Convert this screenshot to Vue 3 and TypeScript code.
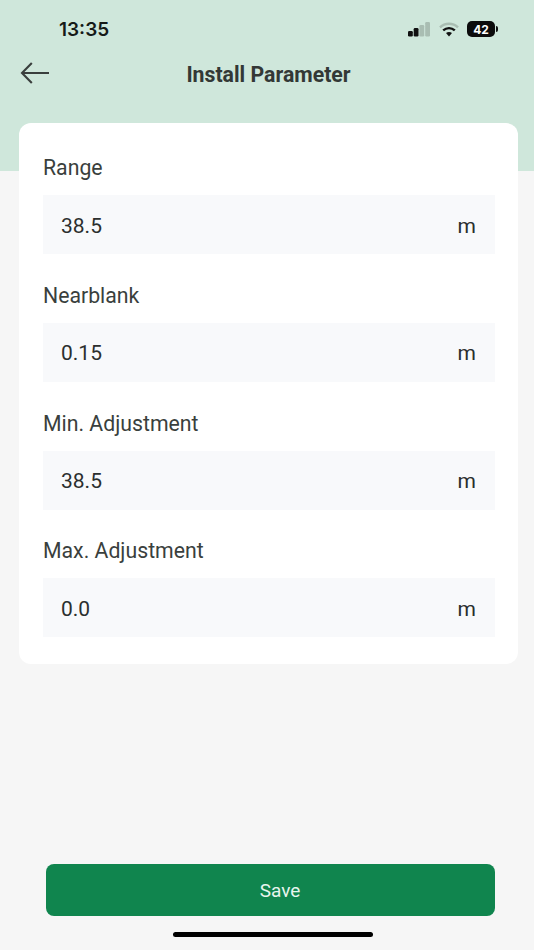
<script setup lang="ts">
const fields = [
  { label: 'Range', value: '38.5', unit: 'm' },
  { label: 'Nearblank', value: '0.15', unit: 'm' },
  { label: 'Min. Adjustment', value: '38.5', unit: 'm' },
  { label: 'Max. Adjustment', value: '0.0', unit: 'm' },
]
</script>

<template>
  <div class="page">
    <header class="hero">
      <div class="status">
        <span class="time">13:35</span>
        <div class="indicators">
          <svg class="signal" width="22" height="15" viewBox="0 0 22 15">
            <rect x="0" y="9" width="4.800" height="5.500" rx="1.200" fill="#111" />
            <rect x="5.700" y="6" width="4.800" height="8.500" rx="1.200" fill="#111" />
            <rect x="11.400" y="3" width="4.800" height="11.500" rx="1.200" fill="#a9bdb2" />
            <rect x="17.200" y="0" width="4.800" height="14.500" rx="1.200" fill="#a9bdb2" />
          </svg>
          <svg class="wifi" width="20" height="15" viewBox="0 0 20 15">
            <path d="M1 5.400C6 .6 14 .6 19 5.400" fill="none" stroke="#a9bdb2" stroke-width="2.400" />
            <path d="M4.200 8.400C7.600 5.300 12.400 5.300 15.800 8.400" fill="none" stroke="#111" stroke-width="2.400" />
            <path d="M7 11c1.800-1.400 4.200-1.400 6 0l-3 3.400z" fill="#111" />
          </svg>
          <div class="battery"><span>42</span></div>
          <span class="cap"></span>
        </div>
      </div>
      <div class="nav">
        <button class="back" type="button" aria-label="Back">
          <svg width="30" height="22" viewBox="0 0 30 22">
            <path d="M29 11H2M11.800 1 2 11l9.800 10" fill="none" stroke="#3a3f3d" stroke-width="2.100" />
          </svg>
        </button>
        <h1 class="title">Install Parameter</h1>
      </div>
    </header>

    <main class="card">
      <section v-for="f in fields" :key="f.label" class="field">
        <div class="label">{{ f.label }}</div>
        <div class="input">
          <span>{{ f.value }}</span>
          <span>{{ f.unit }}</span>
        </div>
      </section>
    </main>

    <footer class="footer">
      <button class="save" type="button">Save</button>
      <div class="home"></div>
    </footer>
  </div>
</template>

<style>
html, body { margin: 0; background: #f6f6f6; }
</style>

<style scoped>
.page {
  width: 534px;
  height: 950px;
  display: flex;
  flex-direction: column;
  background: #f6f6f6;
  font-family: Roboto, "Liberation Sans", sans-serif;
  color: #333836;
  overflow: hidden;
}
.hero {
  height: 171px;
  flex: none;
  background: #cfe7db;
  box-sizing: border-box;
  padding-top: 14px;
}
.status {
  height: 30px;
  display: flex;
  align-items: center;
  justify-content: space-between;
  padding: 0 36px 0 59px;
}
.time {
  font-family: Inter, Roboto, sans-serif;
  font-size: 19px;
  font-weight: 600;
  color: #161a18;
}
.indicators {
  display: flex;
  align-items: center;
}
.signal { margin-right: 9px; margin-top: 1px; }
.wifi { margin-right: 8px; margin-top: 1px; }
.battery {
  width: 28px;
  height: 16px;
  border-radius: 5px;
  background: #0c0c0c;
  display: flex;
  align-items: center;
  justify-content: center;
  color: #fff;
  font-family: Inter, Roboto, sans-serif;
  font-size: 12px;
  font-weight: 700;
}
.cap {
  width: 2px;
  height: 6px;
  margin-left: 1px;
  border-radius: 0 2px 2px 0;
  background: #111;
}
.nav {
  position: relative;
  height: 30px;
  margin-top: 15px;
  padding-left: 3px;
  display: flex;
  align-items: center;
  justify-content: center;
}
.back {
  position: absolute;
  left: 20px;
  top: 3px;
  padding: 0;
  border: 0;
  background: none;
  line-height: 0;
}
.title {
  margin: 0;
  font-size: 21.250px;
  font-weight: 700;
  color: #333836;
}
.card {
  margin: -48px 16px 0 19px;
  height: 541px;
  flex: none;
  box-sizing: border-box;
  padding: 16px 23px 0 24px;
  background: #fff;
  border-radius: 12px;
  display: flex;
  flex-direction: column;
  gap: 12.800px;
}
.field {
  display: flex;
  flex-direction: column;
}
.label {
  height: 56px;
  line-height: 58px;
  font-size: 21.250px;
  color: #3a3f3d;
}
.input {
  height: 59px;
  box-sizing: border-box;
  display: flex;
  align-items: center;
  justify-content: space-between;
  padding: 2px 19px 0 18px;
  background: #f8f9fb;
  font-size: 21px;
  color: #2b2f2e;
}
.footer {
  flex: 1;
  display: flex;
  flex-direction: column;
  align-items: flex-start;
  justify-content: flex-end;
  padding-bottom: 13px;
}
.save {
  width: 449px;
  height: 52px;
  margin-left: 46px;
  padding: 0 0 0 19px;
  border: 0;
  border-radius: 8px;
  background: #10854e;
  color: #e8f5ee;
  font-family: inherit;
  font-size: 19px;
}
.home {
  width: 200px;
  height: 5px;
  margin: 16px 0 0 173px;
  border-radius: 3px;
  background: #000;
}
</style>
